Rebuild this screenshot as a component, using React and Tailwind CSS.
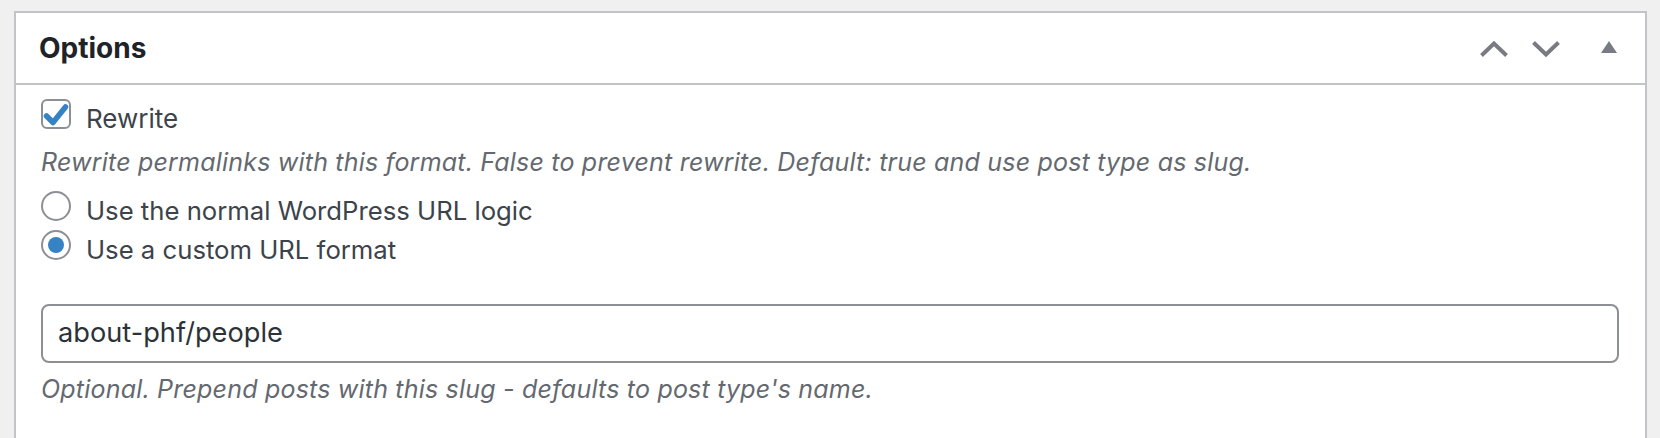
import React from "react";

function ChevronUp() {
  return (
    <svg width="28" height="16" viewBox="0 0 28 16">
      <polyline points="1.5,14.5 14,2.5 26.5,14.5" fill="none" stroke="#787c82" strokeWidth="4" strokeLinejoin="miter" />
    </svg>
  );
}
function ChevronDown() {
  return (
    <svg width="28" height="16" viewBox="0 0 28 16">
      <polyline points="1.5,1.5 14,13.5 26.5,1.5" fill="none" stroke="#787c82" strokeWidth="4" strokeLinejoin="miter" />
    </svg>
  );
}
function Triangle() {
  return (
    <svg width="16" height="12" viewBox="0 0 16 12">
      <polygon points="8,0 16,12 0,12" fill="#787c82" />
    </svg>
  );
}

function Checkbox() {
  return (
    <div className="w-[30px] h-[30px] shrink-0 rounded-[6px] border-2 border-[#8c8f94] bg-white relative">
      <svg className="absolute left-[-2px] top-[-2px]" width="30" height="30" viewBox="0 0 30 30">
        <polyline points="5.5,17 12,23.5 24.5,8" fill="none" stroke="#3582c4" strokeWidth="5.5" strokeLinecap="round" strokeLinejoin="round" />
      </svg>
    </div>
  );
}

function Radio({ checked }) {
  return (
    <div className="w-[30px] h-[30px] shrink-0 rounded-full border-2 border-[#8c8f94] bg-white flex items-center justify-center">
      {checked && <div className="w-[16px] h-[16px] rounded-full bg-[#3582c4]" />}
    </div>
  );
}

export default function App() {
  return (
    <div className="w-[1660px] h-[438px] bg-[#f0f0f1] overflow-hidden pt-[11px] pl-[14px]" style={{ fontFamily: "Inter, 'Noto Sans', sans-serif" }}>
      <div className="w-[1633px] bg-white border-2 border-[#c3c4c7]">
        <div className="h-[72px] border-b-2 border-[#c3c4c7] flex items-start justify-between">
          <h2 className="pl-[23px] text-[28px] leading-[70px] font-bold text-[#1d2327]">Options</h2>
          <div className="flex items-start mt-[28px] pr-[28px]">
            <ChevronUp />
            <div className="ml-[24px]"><ChevronDown /></div>
            <div className="ml-[41px]"><Triangle /></div>
          </div>
        </div>
        <div className="pl-[25px] pr-[26px] pb-[40px]">
          <div className="flex items-start mt-[14px]">
            <Checkbox />
            <span className="ml-[15px] mt-[5px] text-[26px] leading-[30px] text-[#3c434a]">Rewrite</span>
          </div>
          <p className="mt-[13px] text-[25px] leading-[30px] tracking-[0.2px] italic text-[#646970]">
            Rewrite permalinks with this format. False to prevent rewrite. Default: true and use post type as slug.
          </p>
          <div className="flex items-start mt-[14px]">
            <Radio />
            <span className="ml-[15px] mt-[5px] text-[25.7px] leading-[30px] text-[#3c434a]">Use the normal WordPress URL logic</span>
          </div>
          <div className="flex items-start mt-[4px]">
            <Radio checked />
            <span className="ml-[15px] mt-[5px] text-[25.7px] leading-[30px] text-[#3c434a]">Use a custom URL format</span>
          </div>
          <div className="mt-[39px] h-[59px] rounded-[8px] border-2 border-[#8c8f94] flex items-center pl-[15px] text-[27.2px] text-[#2c3338]">
            about-phf/people
          </div>
          <p className="mt-[11px] text-[25px] leading-[30px] tracking-[0.2px] italic text-[#646970]">
            Optional. Prepend posts with this slug - defaults to post type's name.
          </p>
        </div>
      </div>
    </div>
  );
}
